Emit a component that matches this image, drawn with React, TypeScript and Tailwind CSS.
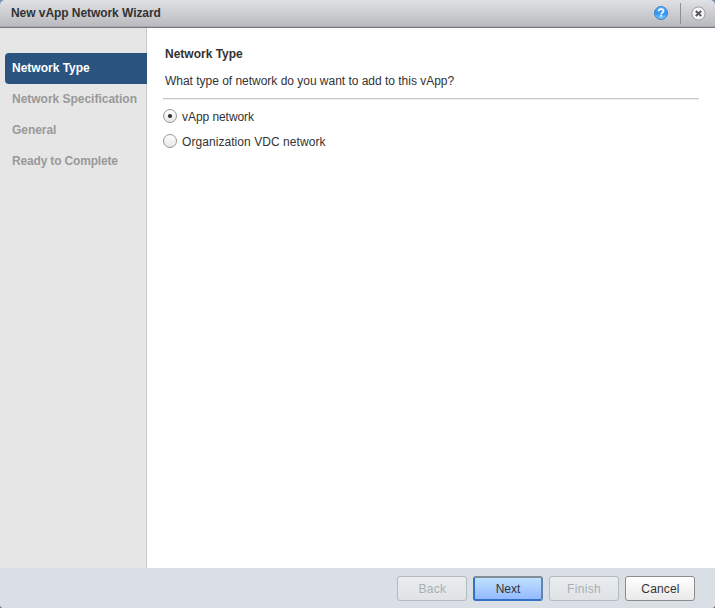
import React, { useState } from "react";

const steps = [
  { label: "Network Type", spacing: "tracking-[0px]" },
  { label: "Network Specification", spacing: "tracking-[-0.02px]" },
  { label: "General", spacing: "tracking-[-0.05px]" },
  { label: "Ready to Complete", spacing: "tracking-[-0.17px]" },
];

function HelpIcon() {
  return (
    <svg width="14" height="14" viewBox="0 0 14 14">
      <defs>
        <linearGradient id="help" x1="0" y1="0" x2="0" y2="1">
          <stop offset="0" stopColor="#62b2f8" />
          <stop offset="0.5" stopColor="#3293f5" />
          <stop offset="1" stopColor="#7fcfff" />
        </linearGradient>
      </defs>
      <circle cx="7" cy="7" r="6.5" fill="url(#help)" stroke="#3b7fcb" />
      <path d="M4.7 5.2c0-2.8 4.8-2.7 4.8-.1 0 1.6-2.3 1.5-2.3 3.1" fill="none" stroke="#fff" strokeWidth="1.7" />
      <path d="M6.3 9.1h1.8v1.7H6.3z" fill="#fff" />
    </svg>
  );
}

function CloseIcon() {
  return (
    <svg width="15" height="15" viewBox="0 0 15 15">
      <circle cx="7.5" cy="7.5" r="6.6" fill="#f5f5f5" stroke="#999a9d" />
      <path d="M4.8 5l5.4 5M10.2 5l-5.4 5" stroke="#56575b" strokeWidth="2" />
    </svg>
  );
}

type RadioProps = { label: string; spacing: string; checked: boolean; onSelect: () => void };

function Radio({ label, spacing, checked, onSelect }: RadioProps) {
  return (
    <button role="radio" aria-checked={checked} onClick={onSelect} className="flex h-[25px] items-center gap-[5px] whitespace-nowrap text-left">
      <svg width="14" height="14" viewBox="0 0 14 14" className="mb-[2px]">
        <defs>
          <linearGradient id="radio" x1="0" y1="0" x2="0" y2="1">
            <stop offset="0" stopColor="#ffffff" />
            <stop offset="1" stopColor="#e6e6e6" />
          </linearGradient>
        </defs>
        <circle cx="7" cy="7" r="6.5" fill="url(#radio)" stroke="#949698" />
        {checked && <circle cx="7" cy="7" r="2.1" fill="#29303a" />}
      </svg>
      <span className={spacing}>{label}</span>
    </button>
  );
}

const disabledButton = "border-[#b5babd] bg-linear-to-b from-[#e9edf0] to-[#dfe3e6] text-[#a9afb3]";

export default function App() {
  const [choice, setChoice] = useState(0);
  return (
    <div className="flex h-[608px] w-[715px] flex-col overflow-hidden bg-[#5e6065] font-['Liberation_Sans',Arial,sans-serif] text-[12px] leading-[14px] text-[#333333]">
      <div className="flex min-h-0 flex-1 flex-col overflow-hidden rounded-b-[3px] bg-[#dadee5]">
        <div className="bg-[#7590ad]">
          <header className="flex h-7 items-center rounded-t-[5px] border-b border-[#77787c] bg-linear-to-b from-[#e0e1e4] to-[#b8b9bd] pr-[9px] pl-[11px] shadow-[inset_0_-1px_0_#aaabaf]">
            <h1 className="flex-1 pb-[1px] font-bold tracking-[-0.06px]">New vApp Network Wizard</h1>
            <div className="flex h-full items-center pb-[1px]">
              <HelpIcon />
              <span className="mx-3 h-[21px] w-px bg-[#8f9094]" />
              <span className="-ml-[2px]"><CloseIcon /></span>
            </div>
          </header>
        </div>
        <div className="flex min-h-0 flex-1">
          <nav className="w-[147px] border-r border-[#c7c8ca] bg-[#e6e6e6] pt-[25px] pl-[5px]">
            {steps.map((s, i) => (
              <div key={s.label} className={`flex h-[31px] items-center pl-[7px] pb-[1px] font-bold whitespace-nowrap ${i === 0 ? "-mr-px rounded-l-[4px] bg-[#2a547f] text-white" : "text-[#999999]"}`}>
                <span className={s.spacing}>{s.label}</span>
              </div>
            ))}
          </nav>
          <main className="flex-1 bg-white pt-[19px] pr-4 pl-4">
            <h2 className="pl-[2px] font-bold">Network Type</h2>
            <p className="mt-[13px] pl-[2px] tracking-[-0.02px]">What type of network do you want to add to this vApp?</p>
            <hr className="mt-[10px] h-[2px] border-0 border-t border-[#c5c9ca] bg-[#eceeee]" />
            <div role="radiogroup" className="mt-1">
              <Radio label="vApp network" spacing="tracking-[-0.06px]" checked={choice === 0} onSelect={() => setChoice(0)} />
              <Radio label="Organization VDC network" spacing="tracking-[0.06px]" checked={choice === 1} onSelect={() => setChoice(1)} />
            </div>
          </main>
        </div>
        <footer className="flex h-10 items-start justify-end gap-[6px] pt-2 pr-5">
          <button disabled className={`h-[25px] w-[70px] rounded-[3px] border pl-px tracking-[0.3px] ${disabledButton}`}>Back</button>
          <button className="h-[25px] w-[70px] rounded-[3px] border-2 border-t-[#838b95] border-r-[#6583ad] border-b-[#3473c3] border-l-[#3473c3] bg-linear-to-b from-[#bfe2ff] to-[#94b9ff]">Next</button>
          <button disabled className={`h-[25px] w-[70px] rounded-[3px] border tracking-[0.3px] ${disabledButton}`}>Finish</button>
          <button className="h-[25px] w-[70px] rounded-[3px] border border-[#8b8c8e] bg-linear-to-b from-white to-[#e9e9e9] pl-px tracking-[0.15px]">Cancel</button>
        </footer>
      </div>
    </div>
  );
}
